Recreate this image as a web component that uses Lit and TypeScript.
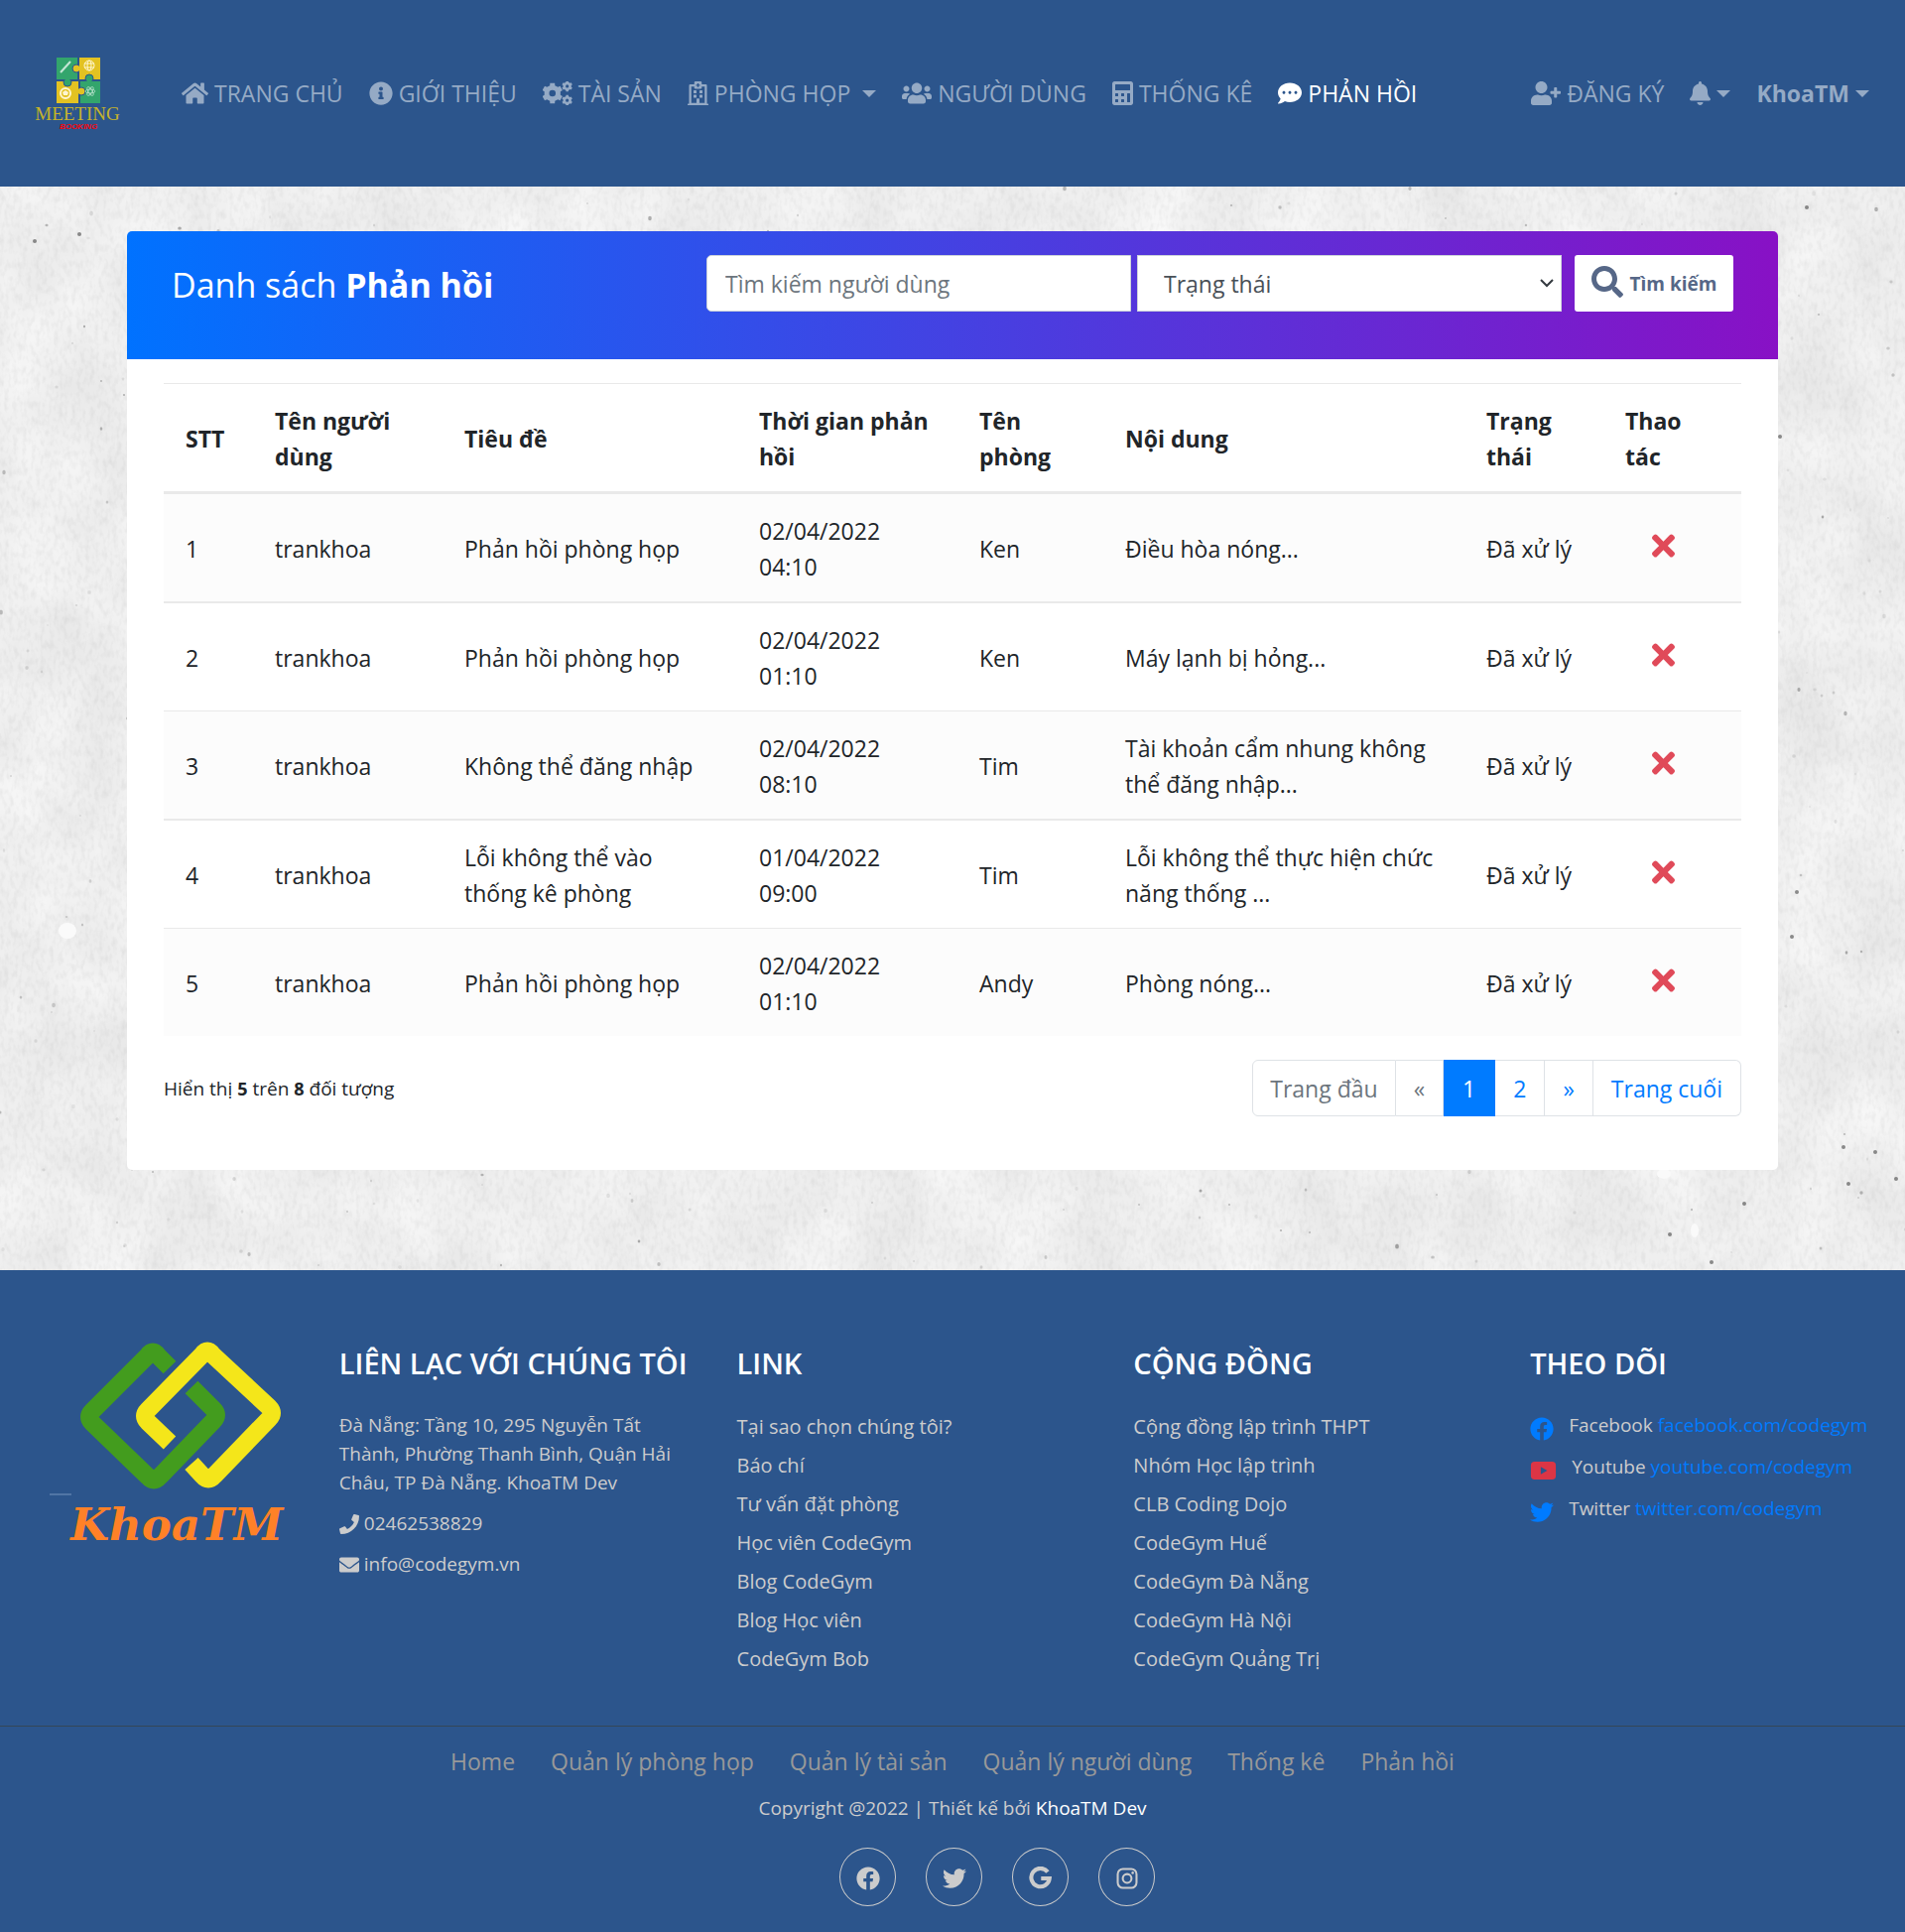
import { LitElement, html, svg, css, nothing, TemplateResult } from "lit";
import { customElement } from "lit/decorators.js";

interface Icon {
  w: number;
  d?: string;
  body?: TemplateResult;
}

/** Outline of a cog wheel with a round hole, as an even-odd path. */
function gear(cx: number, cy: number, r: number, teeth: number, hole: number): string {
  const inner = r * 0.78;
  const step = (Math.PI * 2) / teeth;
  const pt = (radius: number, a: number) =>
    `${(cx + radius * Math.cos(a)).toFixed(1)} ${(cy + radius * Math.sin(a)).toFixed(1)}`;
  let d = "";
  for (let i = 0; i < teeth; i++) {
    const a = i * step - Math.PI / 2;
    d += `${i ? "L" : "M"}${pt(inner, a - step * 0.3)}L${pt(r, a - step * 0.22)}L${pt(r, a + step * 0.22)}L${pt(inner, a + step * 0.3)}`;
  }
  return `${d}ZM${cx - hole} ${cy}a${hole} ${hole} 0 1 0 ${hole * 2} 0a${hole} ${hole} 0 1 0 ${-hole * 2} 0z`;
}

const icons: Record<string, Icon> = {
  home: {
    w: 576,
    d: "M280.37 148.26L96 300.11V464a16 16 0 0 0 16 16l112.06-.29a16 16 0 0 0 15.92-16V368a16 16 0 0 1 16-16h64a16 16 0 0 1 16 16v95.64a16 16 0 0 0 16 16.05L464 480a16 16 0 0 0 16-16V300L295.67 148.26a12.19 12.19 0 0 0-15.3 0zM571.6 251.47L488 182.56V44.05a12 12 0 0 0-12-12h-56a12 12 0 0 0-12 12v72.61L318.47 43a48 48 0 0 0-61 0L4.34 251.47a12 12 0 0 0-1.6 16.9l25.5 31A12 12 0 0 0 45.15 301l235.22-193.74a12.19 12.19 0 0 1 15.3 0L530.9 301a12 12 0 0 0 16.9-1.6l25.5-31a12 12 0 0 0-1.7-16.93z",
  },
  info: {
    w: 512,
    d: "M256 8C119.043 8 8 119.083 8 256c0 136.997 111.043 248 248 248s248-111.003 248-248C504 119.083 392.957 8 256 8zm0 110c23.196 0 42 18.804 42 42s-18.804 42-42 42-42-18.804-42-42 18.804-42 42-42zm56 254c0 6.627-5.373 12-12 12h-88c-6.627 0-12-5.373-12-12v-24c0-6.627 5.373-12 12-12h12v-64h-12c-6.627 0-12-5.373-12-12v-24c0-6.627 5.373-12 12-12h64c6.627 0 12 5.373 12 12v100h12c6.627 0 12 5.373 12 12v24z",
  },
  cogs: {
    w: 640,
    d: gear(208, 256, 226, 6, 70) + gear(526, 104, 116, 6, 34) + gear(526, 408, 116, 6, 34),
  },
  hospital: {
    w: 448,
    body: svg`<path fill-rule="evenodd" d="M0 512v-20q0-12 12-12h20V88q0-24 24-24h88V24q0-24 24-24h112q24 0 24 24v40h88q24 0 24 24v392h20q12 0 12 12v20zM80 464h112v-84q0-12 12-12h40q12 0 12 12v84h112V112h-64v24q0 24-24 24H168q-24 0-24-24v-24H80z"/><path d="M128 204q0-12 12-12h40q12 0 12 12v40q0 12-12 12h-40q-12 0-12-12zM256 204q0-12 12-12h40q12 0 12 12v40q0 12-12 12h-40q-12 0-12-12zM128 300q0-12 12-12h40q12 0 12 12v40q0 12-12 12h-40q-12 0-12-12zM256 300q0-12 12-12h40q12 0 12 12v40q0 12-12 12h-40q-12 0-12-12z"/><path fill="#2c558c" d="M210 42h28v26h26v28h-26v26h-28V96h-26V68h26z"/>`,
  },
  users: {
    w: 640,
    d: "M96 224c35.3 0 64-28.7 64-64s-28.7-64-64-64-64 28.7-64 64 28.7 64 64 64zm448 0c35.3 0 64-28.7 64-64s-28.7-64-64-64-64 28.7-64 64 28.7 64 64 64zm32 32h-64c-17.6 0-33.5 7.1-45.1 18.6 40.3 22.1 68.9 62 75.1 109.4h66c17.7 0 32-14.3 32-32v-32c0-35.3-28.7-64-64-64zm-256 0c61.9 0 112-50.1 112-112S381.9 32 320 32 208 82.1 208 144s50.1 112 112 112zm76.8 32h-8.3c-20.8 10-43.9 16-68.5 16s-47.6-6-68.5-16h-8.3C179.6 288 128 339.6 128 403.2V432c0 26.5 21.5 48 48 48h288c26.5 0 48-21.5 48-48v-28.8c0-63.6-51.6-115.2-115.2-115.2zm-223.7-13.4C161.5 263.1 145.6 256 128 256H64c-35.3 0-64 28.7-64 64v32c0 17.7 14.3 32 32 32h65.9c6.3-47.4 34.9-87.3 75.2-109.4z",
  },
  calculator: {
    w: 448,
    d: "M400 0H48C22.4 0 0 22.4 0 48v416c0 25.6 22.4 48 48 48h352c25.6 0 48-22.4 48-48V48c0-25.6-22.4-48-48-48zM64 77q0-13 13-13h294q13 0 13 13v102q0 13-13 13H77q-13 0-13-13zM64 269q0-13 13-13h38q13 0 13 13v38q0 13-13 13H77q-13 0-13-13zM192 269q0-13 13-13h38q13 0 13 13v38q0 13-13 13h-38q-13 0-13-13zM64 397q0-13 13-13h38q13 0 13 13v38q0 13-13 13H77q-13 0-13-13zM192 397q0-13 13-13h38q13 0 13 13v38q0 13-13 13h-38q-13 0-13-13zM320 269q0-13 13-13h38q13 0 13 13v166q0 13-13 13h-38q-13 0-13-13z",
  },
  comment: {
    w: 512,
    d: "M256 32C114.6 32 0 125.1 0 240c0 49.6 21.4 95 57 130.7C44.5 421.1 2.7 466 2.2 466.5c-2.2 2.3-2.8 5.7-1.5 8.7S4.8 480 8 480c66.3 0 116-31.8 140.6-51.4 32.7 12.3 69 19.4 107.4 19.4 141.4 0 256-93.1 256-208S397.4 32 256 32zM128 272c-17.7 0-32-14.3-32-32s14.3-32 32-32 32 14.3 32 32-14.3 32-32 32zm128 0c-17.7 0-32-14.3-32-32s14.3-32 32-32 32 14.3 32 32-14.3 32-32 32zm128 0c-17.7 0-32-14.3-32-32s14.3-32 32-32 32 14.3 32 32-14.3 32-32 32z",
  },
  userPlus: {
    w: 640,
    d: "M624 208h-64v-64c0-8.8-7.2-16-16-16h-32c-8.8 0-16 7.2-16 16v64h-64c-8.8 0-16 7.2-16 16v32c0 8.8 7.2 16 16 16h64v64c0 8.8 7.2 16 16 16h32c8.8 0 16-7.2 16-16v-64h64c8.8 0 16-7.2 16-16v-32c0-8.8-7.2-16-16-16zm-400 48c70.7 0 128-57.3 128-128S294.7 0 224 0 96 57.3 96 128s57.3 128 128 128zm89.6 32h-16.7c-22.2 10.2-46.9 16-72.9 16s-50.6-5.8-72.9-16h-16.7C60.2 288 0 348.2 0 422.4V464c0 26.5 21.5 48 48 48h352c26.5 0 48-21.5 48-48v-41.6c0-74.2-60.2-134.4-134.4-134.4z",
  },
  bell: {
    w: 448,
    d: "M224 512c35.32 0 63.97-28.65 63.97-64H160.03c0 35.35 28.65 64 63.97 64zm215.39-149.71c-19.32-20.76-55.47-51.99-55.47-154.29 0-77.7-54.48-139.9-127.94-155.16V32c0-17.67-14.32-32-31.98-32s-31.98 14.33-31.98 32v20.84C118.56 68.1 64.08 130.3 64.08 208c0 102.3-36.15 133.53-55.47 154.29-6 6.45-8.66 14.16-8.61 21.71.11 16.4 12.98 32 32.1 32h383.8c19.12 0 32-15.6 32.1-32 .05-7.55-2.61-15.27-8.61-21.71z",
  },
  search: {
    w: 512,
    d: "M505 442.7L405.3 343c-4.5-4.5-10.6-7-17-7H372c27.6-35.3 44-79.7 44-128C416 93.1 322.9 0 208 0S0 93.1 0 208s93.1 208 208 208c48.3 0 92.7-16.4 128-44v16.3c0 6.4 2.5 12.5 7 17l99.7 99.7c9.4 9.4 24.6 9.4 33.9 0l28.3-28.3c9.4-9.4 9.4-24.6.1-34zM208 336c-70.7 0-128-57.2-128-128 0-70.7 57.2-128 128-128 70.7 0 128 57.2 128 128 0 70.7-57.2 128-128 128z",
  },
  phone: {
    w: 512,
    d: "M493.4 24.6l-104-24c-11.3-2.6-22.9 3.3-27.5 13.9l-48 112c-4.2 9.8-1.4 21.3 6.9 28l60.6 49.6c-36 76.7-98.9 140.5-177.2 177.2l-49.6-60.6c-6.8-8.3-18.2-11.1-28-6.9l-112 48C3.9 366.5-2 378.1.6 389.4l24 104C27.1 504.2 36.7 512 48 512c256.1 0 464-207.5 464-464 0-11.2-7.7-20.9-18.6-23.4z",
  },
  envelope: {
    w: 512,
    d: "M502.3 190.8c3.9-3.1 9.7-.2 9.7 4.7V400c0 26.5-21.5 48-48 48H48c-26.5 0-48-21.5-48-48V195.6c0-5 5.7-7.8 9.7-4.7 22.4 17.4 52.1 39.5 154.1 113.6 21.1 15.4 56.7 47.8 92.2 47.6 35.7.3 72-32.8 92.3-47.6 102-74.1 131.6-96.3 154-113.7zM256 320c23.2.4 56.6-29.2 73.4-41.4 132.7-96.3 142.8-104.7 173.4-128.7 5.8-4.5 9.2-11.5 9.2-18.9v-19c0-26.5-21.5-48-48-48H48c-26.5 0-48 21.5-48 48v19c0 7.4 3.4 14.3 9.2 18.9 30.6 23.9 40.7 32.4 173.4 128.7 16.8 12.2 50.2 41.8 73.4 41.4z",
  },
  times: {
    w: 352,
    d: "M242.72 256l100.07-100.07c12.28-12.28 12.28-32.19 0-44.48l-22.24-22.24c-12.28-12.28-32.19-12.28-44.48 0L176 189.28 75.93 89.21c-12.28-12.28-32.19-12.28-44.48 0L9.21 111.45c-12.28 12.28-12.28 32.19 0 44.48L109.28 256 9.21 356.07c-12.28 12.28-12.28 32.19 0 44.48l22.24 22.24c12.28 12.28 32.2 12.28 44.48 0L176 322.72l100.07 100.07c12.28 12.28 32.2 12.28 44.48 0l22.24-22.24c12.28-12.28 12.28-32.19 0-44.48L242.72 256z",
  },
  facebook: {
    w: 512,
    d: "M504 256C504 119 393 8 256 8S8 119 8 256c0 123.78 90.69 226.38 209.25 245V327.69h-63V256h63v-54.64c0-62.15 37-96.48 93.67-96.48 27.14 0 55.52 4.84 55.52 4.84v61h-31.28c-30.8 0-40.41 19.12-40.41 38.73V256h68.78l-11 71.69h-57.78V501C413.31 482.38 504 379.78 504 256z",
  },
  youtube: {
    w: 576,
    d: "M100 64h376q80 0 80 80v224q0 80-80 80H100q-80 0-80-80V144q0-80 80-80zM232 178v156l140-78z",
  },
  twitter: {
    w: 512,
    d: "M459.37 151.716c.325 4.548.325 9.097.325 13.645 0 138.72-105.583 298.558-298.558 298.558-59.452 0-114.68-17.219-161.137-47.106 8.447.974 16.568 1.299 25.34 1.299 49.055 0 94.213-16.568 130.274-44.832-46.132-.975-84.792-31.188-98.112-72.772 6.498.974 12.995 1.624 19.818 1.624 9.421 0 18.843-1.3 27.614-3.573-48.081-9.747-84.143-51.98-84.143-102.985v-1.299c13.969 7.797 30.214 12.67 47.431 13.319-28.264-18.843-46.781-51.005-46.781-87.391 0-19.492 5.197-37.36 14.294-52.954 51.655 63.675 129.3 105.258 216.365 109.807-1.624-7.797-2.599-15.918-2.599-24.04 0-57.828 46.782-104.934 104.934-104.934 30.213 0 57.502 12.67 76.67 33.137 23.715-4.548 46.456-13.32 66.599-25.34-7.798 24.366-24.366 44.833-46.132 57.827 21.117-2.273 41.584-8.122 60.426-16.243-14.292 20.791-32.161 39.308-52.628 54.253z",
  },
  google: {
    w: 512,
    body: svg`<path fill="none" stroke="currentColor" stroke-width="88" d="M404 118A196 196 0 1 0 442 256H262"/>`,
  },
  instagram: {
    w: 512,
    body: svg`<g fill="none" stroke="currentColor" stroke-width="44"><rect x="54" y="54" width="404" height="404" rx="112"/><circle cx="256" cy="256" r="94"/></g><circle cx="376" cy="136" r="27"/>`,
  },
};

function icon(name: string, size = 24) {
  const i = icons[name];
  return html`<svg class="icon" width=${Math.round((i.w / 512) * size)} height=${size} viewBox="0 0 ${i.w} 512" fill="currentColor" aria-hidden="true">
    ${i.body ?? svg`<path fill-rule="evenodd" d=${i.d ?? ""}/>`}
  </svg>`;
}

const caret = html`<svg class="caret" width="14" height="7" viewBox="0 0 14 7" fill="currentColor" aria-hidden="true"><path d="M0 0h14l-7 7z"/></svg>`;

const navItems = [
  { icon: "home", text: "TRANG CHỦ" },
  { icon: "info", text: "GIỚI THIỆU" },
  { icon: "cogs", text: "TÀI SẢN" },
  { icon: "hospital", text: "PHÒNG HỌP", menu: true },
  { icon: "users", text: "NGƯỜI DÙNG" },
  { icon: "calculator", text: "THỐNG KÊ" },
  { icon: "comment", text: "PHẢN HỒI", active: true },
];

const columns = ["STT", "Tên người dùng", "Tiêu đề", "Thời gian phản hồi", "Tên phòng", "Nội dung", "Trạng thái", "Thao tác"];

const rows = [
  ["trankhoa", "Phản hồi phòng họp", "02/04/2022 04:10", "Ken", "Điều hòa nóng...", "Đã xử lý"],
  ["trankhoa", "Phản hồi phòng họp", "02/04/2022 01:10", "Ken", "Máy lạnh bị hỏng...", "Đã xử lý"],
  ["trankhoa", "Không thể đăng nhập", "02/04/2022 08:10", "Tim", "Tài khoản cẩm nhung không thể đăng nhập...", "Đã xử lý"],
  ["trankhoa", "Lỗi không thể vào thống kê phòng", "01/04/2022 09:00", "Tim", "Lỗi không thể thực hiện chức năng thống ...", "Đã xử lý"],
  ["trankhoa", "Phản hồi phòng họp", "02/04/2022 01:10", "Andy", "Phòng nóng...", "Đã xử lý"],
];

const pages = [
  { text: "Trang đầu", state: "disabled" },
  { text: "«", state: "disabled" },
  { text: "1", state: "active" },
  { text: "2", state: "" },
  { text: "»", state: "" },
  { text: "Trang cuối", state: "" },
];

const linkList = ["Tại sao chọn chúng tôi?", "Báo chí", "Tư vấn đặt phòng", "Học viên CodeGym", "Blog CodeGym", "Blog Học viên", "CodeGym Bob"];
const community = ["Cộng đồng lập trình THPT", "Nhóm Học lập trình", "CLB Coding Dojo", "CodeGym Huế", "CodeGym Đà Nẵng", "CodeGym Hà Nội", "CodeGym Quảng Trị"];
const follow = [
  { icon: "facebook", name: "Facebook", link: "facebook.com/codegym" },
  { icon: "youtube", name: "Youtube", link: "youtube.com/codegym" },
  { icon: "twitter", name: "Twitter", link: "twitter.com/codegym" },
];
const bottomMenu = ["Home", "Quản lý phòng họp", "Quản lý tài sản", "Quản lý người dùng", "Thống kê", "Phản hồi"];

/** Rough concrete wall: two layers of noise with scattered pits. */
@customElement("concrete-wall")
export class ConcreteWall extends LitElement {
  static styles = css`
    :host { position: absolute; inset: 0; overflow: hidden; background: #eeeeee; }
    svg { display: block; width: 100%; height: 100%; }
  `;

  private pits() {
    let seed = 41;
    const next = () => (seed = (seed * 16807) % 2147483647) / 2147483647;
    const shapes = [];
    for (let i = 0; i < 520; i++) {
      const x = next() * 1920;
      const y = next() * 1092;
      const r = 0.8 + next() * 1.1;
      const o = next();
      shapes.push(svg`<ellipse cx=${x.toFixed(0)} cy=${y.toFixed(0)} rx=${r.toFixed(1)} ry=${(r * (0.8 + next() * 0.6)).toFixed(1)} fill="#555" opacity=${(0.1 + o * o * 0.4).toFixed(2)}/>`);
    }
    const dark = [[1821, 21], [1794, 252], [1811, 711], [1806, 756], [1863, 1005], [1911, 1000], [1858, 968], [1890, 973], [1758, 1025], [1683, 1056], [1725, 1084], [35, 55], [80, 48]];
    const light = [[1677, 995, 7, 5], [1708, 1052, 4, 7], [68, 750, 9, 8]];
    return svg`<g filter="url(#soft)">${shapes}
      ${dark.map(([x, y]) => svg`<ellipse cx=${x} cy=${y} rx="2" ry="2" fill="#444" opacity=".6"/>`)}
      ${light.map(([x, y, a, b]) => svg`<ellipse cx=${x} cy=${y} rx=${a} ry=${b} fill="#fafafa"/>`)}</g>`;
  }

  render() {
    return html`<svg aria-hidden="true">
      <filter id="cloud" x="0" y="0" width="100%" height="100%" color-interpolation-filters="sRGB">
        <feTurbulence type="fractalNoise" baseFrequency=".014 .012" numOctaves="5" seed="7"/>
        <feColorMatrix values=".09 0 0 0 .892 .09 0 0 0 .892 .09 0 0 0 .892 0 0 0 0 1"/>
      </filter>
      <filter id="grain" x="0" y="0" width="100%" height="100%" color-interpolation-filters="sRGB">
        <feTurbulence type="fractalNoise" baseFrequency=".22 .12" numOctaves="2" seed="3"/>
        <feColorMatrix values="0 0 0 0 .3 0 0 0 0 .3 0 0 0 0 .3 .3 0 0 0 -.13"/>
      </filter>
      <filter id="soft" filterUnits="userSpaceOnUse" x="0" y="0" width="100%" height="100%"><feGaussianBlur stdDeviation=".7"/></filter>
      <rect width="100%" height="100%" filter="url(#cloud)"/>
      <rect width="100%" height="100%" filter="url(#grain)" opacity=".5"/>
      ${this.pits()}
    </svg>`;
  }
}

@customElement("app-root")
export class AppRoot extends LitElement {
  static styles = css`
    :host {
      display: block;
      font-family: "Open Sans", "Noto Sans", sans-serif;
      font-size: 23px;
      line-height: 36px;
      color: #212529;
      background: #2c558c;
    }
    * { box-sizing: border-box; }
    a { color: inherit; text-decoration: none; }
    ul { list-style: none; margin: 0; padding: 0; }
    h2, h3, p { margin: 0; }
    .icon, .caret { display: block; flex: none; }

    .navbar { display: flex; align-items: center; min-height: 188px; padding: 0 36px 0 32px; color: #95aac5; }
    .brand { display: block; margin-right: 55px; }
    .brand svg { display: block; }
    .nav, .nav-right { display: flex; align-items: center; gap: 26px; white-space: nowrap; }
    .nav-right { margin-left: auto; }
    .nav-link { display: flex; align-items: center; gap: 6px; }
    .nav-link .caret { margin-left: 6px; }
    .nav-right .caret { margin-left: 0; }
    .active-link { color: #fff; }
    .strong { font-weight: 700; }

    .main { position: relative; padding: 45px 128px 101px; }
    .card { position: relative; background: #fff; border-radius: 5px; overflow: hidden; }
    .card-head { display: flex; justify-content: space-between; align-items: flex-start; min-height: 129px; padding: 24px 45px; color: #fff; background: linear-gradient(to right, #0072ff, #8811c5); }
    .card-title { font-size: 34px; line-height: 60px; font-weight: 500; }
    .search { display: flex; flex: 0 1 1035px; }
    .fields { display: grid; grid-template-columns: 1fr 1fr; flex: 1; gap: 6px; margin-right: 13px; }
    .field { width: 100%; min-width: 0; height: 57px; margin: 0; border: 1px solid #ced4da; background-color: #fff; font: inherit; color: #495057; }
    .text-field { padding: 0 18px; border-radius: 5px 0 0 5px; }
    .text-field::placeholder { color: #6c757d; opacity: 1; }
    .select-field { padding: 0 30px 0 26px; border-radius: 0; appearance: none; background-repeat: no-repeat; background-position: right 7px center; background-image: url("data:image/svg+xml,%3Csvg xmlns='http://www.w3.org/2000/svg' width='14' height='9' fill='none' stroke='%23343a40' stroke-width='2'%3E%3Cpath d='M1 1l6 6 6-6'/%3E%3C/svg%3E"); }
    .search-btn { display: flex; align-items: center; justify-content: center; gap: 7px; width: 160px; height: 57px; padding: 0; border: 0; border-radius: 3px; background: #fff; color: #566787; font: 700 19px/28px "Open Sans", "Noto Sans", sans-serif; }
    .search-btn .icon { margin-bottom: 4px; }
    .card-body { padding: 24px 37px 54px; }

    table { width: 100%; table-layout: fixed; border-collapse: separate; border-spacing: 0; }
    th, td { padding: 19px 22px 17px; text-align: left; vertical-align: middle; }
    th { font-weight: 700; border-top: 1px solid #e9e9e9; border-bottom: 3px solid #e9e9e9; }
    tbody tr:nth-child(odd) { background: #fcfcfc; }
    tbody tr:nth-child(even) td { border-top: 2px solid #e9e9e9; }
    tbody tr:nth-child(odd):not(:first-child) td { border-top: 1px solid #e9e9e9; }
    .c1 { width: 90px; } .c2 { width: 191px; } .c3 { width: 297px; } .c4 { width: 222px; }
    .c5 { width: 147px; } .c6 { width: 364px; } .c7 { width: 140px; } .c8 { width: 139px; }
    .delete { display: flex; justify-content: center; width: 76px; padding: 0 0 6px; border: 0; background: none; color: #e04a59; }

    .table-foot { display: flex; justify-content: space-between; align-items: center; margin-top: 24px; }
    .hint { font-size: 19px; }
    .hint b { font-size: 18px; }
    .pages { display: flex; }
    .page { display: block; height: 57px; padding: 0 18px; line-height: 57px; border: 1px solid #dee2e6; border-left-width: 0; color: #007bff; }
    .pages li:first-child .page { padding: 0 17px; border-left-width: 1px; border-radius: 6px 0 0 6px; }
    .pages li:last-child .page { border-radius: 0 6px 6px 0; }
    .page.disabled { color: #6c757d; }
    .page.active { padding: 0 19px; color: #fff; background: #007bff; border-color: #007bff; }

    .footer { font-size: 19px; line-height: 29px; color: #ccc; }
    .footer-top { display: grid; grid-template-columns: 342fr 400fr 400fr 400fr 378fr; min-height: 460px; padding-top: 64px; border-bottom: 1px solid #344657; }
    .logo { padding-left: 50px; }
    .logo svg { display: block; }
    .heading { margin-bottom: 18px; font-size: 29px; line-height: 60px; font-weight: 600; color: #fff; white-space: nowrap; }
    .contact { padding-right: 50px; }
    .contact-line { display: flex; align-items: center; gap: 5px; margin-top: 12px; }
    .links { margin-top: -4px; font-size: 20px; line-height: 39px; }
    .follow li { display: flex; gap: 15px; margin-bottom: 12px; }
    .follow .icon { margin-top: 6px; color: #007bff; }
    .follow .icon-youtube .icon { color: #dc3545; }
    .follow a { color: #007bff; }

    .footer-bottom { display: flex; flex-direction: column; align-items: center; padding: 17px 0 26px; }
    .bottom-menu { display: flex; gap: 36px; font-size: 23px; line-height: 36px; color: #999; }
    .copyright { margin: 15px 0 25px; }
    .copyright a { color: #fff; }
    .social { display: flex; gap: 30px; padding-left: 90px; }
    .round { display: flex; align-items: center; justify-content: center; width: 57px; height: 59px; padding-top: 3px; border: 1px solid #ccc; border-radius: 50%; }
  `;

  private brand() {
    return html`<a class="brand" href="#" aria-label="Meeting Booking"><svg width="96" height="92" viewBox="0 0 96 92">
      <g>
        <path fill="#33a56c" d="M25 10h21v22H25zM49 34h20v22H49z"/>
        <path fill="#e3c222" d="M48 10h21v22H48zM25 34h22v22H25z"/>
        <g stroke="#2c558c" stroke-width="1"><circle cx="45" cy="21" r="4" fill="#e3c222"/><circle cx="36" cy="35" r="4" fill="#33a56c"/><circle cx="50" cy="44" r="4" fill="#e3c222"/><circle cx="58" cy="31" r="4" fill="#33a56c"/></g>
        <path fill="#e3c222" d="M48 18h3v6h-3zM43 41h4v6h-4z"/><path fill="#33a56c" d="M33 29h6v3h-6zM55 34h6v3h-6z"/>
        <path stroke="#c5e6d5" stroke-width="2" d="M29 25l10-11"/>
        <g fill="none" stroke="#fff6d0" stroke-width="1"><circle cx="58" cy="18" r="5"/><ellipse cx="58" cy="18" rx="2" ry="5"/><path d="M53 16h10M53 20h10"/><circle cx="34" cy="46" r="5" stroke-width="2"/></g>
        <path fill="#fff6d0" d="M34 43l3 2-1 3h-4l-1-3z"/>
        <g fill="none" stroke="#b5e0ca" stroke-width=".8"><ellipse cx="59" cy="44" rx="5" ry="2"/><ellipse cx="59" cy="44" rx="5" ry="2" transform="rotate(60 59 44)"/><ellipse cx="59" cy="44" rx="5" ry="2" transform="rotate(120 59 44)"/></g>
      </g>
      <text x="46" y="73" text-anchor="middle" font-family="Liberation Serif, serif" font-size="19" fill="#c6b32a">MEETING</text>
      <text x="47" y="82" text-anchor="middle" font-family="Liberation Sans, sans-serif" font-size="8" font-weight="700" font-style="italic" fill="#f5060c">BOOKING</text>
    </svg></a>`;
  }

  private companyLogo() {
    return html`<svg width="245" height="220" viewBox="50 1344 245 220" role="img" aria-label="KhoaTM">
      <g fill="none" stroke-width="18" stroke-linejoin="round">
        <path stroke="#439c1e" d="M171 1378L159 1366Q154 1359 149 1366L93 1422Q87 1428 93 1434L149 1488Q155 1495 161 1488L215 1432Q221 1426 215 1420L193 1398"/>
        <path stroke="#f4e61a" d="M171 1454L149 1433Q143 1427 149 1421L204 1365Q209 1358 214 1365L271 1418Q277 1424 271 1430L216 1487Q210 1494 204 1487L193 1475"/>
      </g>
      <path fill="#6b8ab5" opacity=".6" d="M50 1505h22v2H50z"/>
      <text x="71" y="1552" font-family="DejaVu Serif, serif" font-size="45" font-weight="700" font-style="italic" fill="#ff8127">KhoaTM</text>
    </svg>`;
  }

  render() {
    return html`
      <header class="navbar">
        ${this.brand()}
        <nav class="nav">
          ${navItems.map((n) => html`<a href="#" class="nav-link ${n.active ? "active-link" : ""}">${icon(n.icon)}<span>${n.text}</span>${n.menu ? caret : nothing}</a>`)}
        </nav>
        <div class="nav-right">
          <a href="#" class="nav-link">${icon("userPlus")}<span>ĐĂNG KÝ</span></a>
          <a href="#" class="nav-link" aria-label="Thông báo">${icon("bell")}${caret}</a>
          <a href="#" class="nav-link strong"><span>KhoaTM</span>${caret}</a>
        </div>
      </header>

      <main class="main">
        <concrete-wall></concrete-wall>
        <section class="card">
          <div class="card-head">
            <h2 class="card-title">Danh sách <b>Phản hồi</b></h2>
            <form class="search" @submit=${(e: Event) => e.preventDefault()}>
              <div class="fields">
                <input class="field text-field" type="text" placeholder="Tìm kiếm người dùng" aria-label="Tìm kiếm người dùng" />
                <select class="field select-field" aria-label="Trạng thái"><option>Trạng thái</option></select>
              </div>
              <button class="search-btn" type="submit">${icon("search", 32)}<span>Tìm kiếm</span></button>
            </form>
          </div>
          <div class="card-body">
            <table>
              <colgroup>${columns.map((_, i) => html`<col class="c${i + 1}" />`)}</colgroup>
              <thead><tr>${columns.map((c) => html`<th scope="col">${c}</th>`)}</tr></thead>
              <tbody>
                ${rows.map((r, i) => html`<tr><td>${i + 1}</td>${r.map((c) => html`<td>${c}</td>`)}<td><button class="delete" type="button" aria-label="Xóa">${icon("times", 34)}</button></td></tr>`)}
              </tbody>
            </table>
            <div class="table-foot">
              <div class="hint">Hiển thị <b>5</b> trên <b>8</b> đối tượng</div>
              <ul class="pages">${pages.map((p) => html`<li><a href="#" class="page ${p.state}">${p.text}</a></li>`)}</ul>
            </div>
          </div>
        </section>
      </main>

      <footer class="footer">
        <div class="footer-top">
          <div class="logo">${this.companyLogo()}</div>
          <div class="contact">
            <h3 class="heading">LIÊN LẠC VỚI CHÚNG TÔI</h3>
            <p>Đà Nẵng: Tầng 10, 295 Nguyễn Tất Thành, Phường Thanh Bình, Quận Hải Châu, TP Đà Nẵng. KhoaTM Dev</p>
            <p class="contact-line">${icon("phone", 20)}<span>02462538829</span></p>
            <p class="contact-line">${icon("envelope", 20)}<span>info@codegym.vn</span></p>
          </div>
          <div>
            <h3 class="heading">LINK</h3>
            <ul class="links">${linkList.map((l) => html`<li><a href="#">${l}</a></li>`)}</ul>
          </div>
          <div>
            <h3 class="heading">CỘNG ĐỒNG</h3>
            <ul class="links">${community.map((l) => html`<li><a href="#">${l}</a></li>`)}</ul>
          </div>
          <div>
            <h3 class="heading">THEO DÕI</h3>
            <ul class="follow">${follow.map((f) => html`<li class="icon-${f.icon}">${icon(f.icon)}<span>${f.name} <a href="#">${f.link}</a></span></li>`)}</ul>
          </div>
        </div>
        <div class="footer-bottom">
          <nav class="bottom-menu">${bottomMenu.map((m) => html`<a href="#">${m}</a>`)}</nav>
          <p class="copyright">Copyright @2022 | Thiết kế bởi <a href="#">KhoaTM Dev</a></p>
          <div class="social">${["facebook", "twitter", "google", "instagram"].map((s) => html`<a class="round" href="#" aria-label=${s}>${icon(s)}</a>`)}</div>
        </div>
      </footer>
    `;
  }
}
